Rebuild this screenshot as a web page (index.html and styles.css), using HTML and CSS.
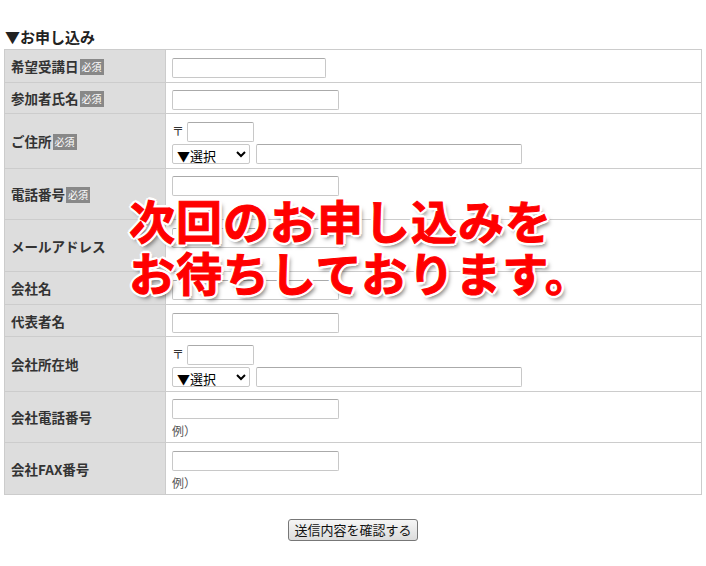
FILE: index.html
```html
<!DOCTYPE html>
<html lang="ja">
<head>
    <meta charset="UTF-8">
    <meta name="viewport" content="width=device-width, initial-scale=1.0">
    <title>お申し込み</title>
    <link rel="stylesheet" href="styles.css">
</head>
<body>

<div class="wrap">
    <h3 class="formTitle">▼お申し込み</h3>

    <table class="formTable">
        <tr class="h33">
            <th>希望受講日<span class="req">必須</span></th>
            <td><input type="text" class="inDate"></td>
        </tr>
        <tr class="h31">
            <th>参加者氏名<span class="req">必須</span></th>
            <td><input type="text" class="inMid"></td>
        </tr>
        <tr class="h55">
            <th>ご住所<span class="req">必須</span></th>
            <td>
                <div class="zipLine">〒 <input type="text" class="inZip"></div>
                <div class="prefLine">
                    <select class="inPref"><option>▼選択</option></select>
                    <input type="text" class="inAddr">
                </div>
            </td>
        </tr>
        <tr class="h51">
            <th>電話番号<span class="req">必須</span></th>
            <td><input type="text" class="inMid"><div class="note">&nbsp;</div></td>
        </tr>
        <tr class="h52">
            <th>メールアドレス</th>
            <td><input type="text" class="inMid"><div class="note">&nbsp;</div></td>
        </tr>
        <tr class="h33">
            <th>会社名</th>
            <td><input type="text" class="inMid"></td>
        </tr>
        <tr class="h32">
            <th>代表者名</th>
            <td><input type="text" class="inMid"></td>
        </tr>
        <tr class="h55">
            <th>会社所在地</th>
            <td>
                <div class="zipLine">〒 <input type="text" class="inZip"></div>
                <div class="prefLine">
                    <select class="inPref"><option>▼選択</option></select>
                    <input type="text" class="inAddr">
                </div>
            </td>
        </tr>
        <tr class="h51">
            <th>会社電話番号</th>
            <td><input type="text" class="inMid"><div class="note">例）</div></td>
        </tr>
        <tr class="h52">
            <th>会社FAX番号</th>
            <td><input type="text" class="inMid"><div class="note">例）</div></td>
        </tr>
    </table>

    <div class="submitArea">
        <button type="button" class="submitBtn">送信内容を確認する</button>
    </div>

    <div class="closedMsg">次回のお申し込みを<br>お待ちしております。</div>
</div>

</body>
</html>
```

FILE: styles.css
```css
body {
    margin: 0;
    padding: 0;
    background: #fff;
    color: #333;
    font-family: "Noto Sans CJK JP", "Noto Sans", sans-serif;
}

.wrap {
    position: relative;
    padding: 0 4px;
}

.formTitle {
    margin: 0;
    padding: 27px 0 0 1px;
    height: 22px;
    font-size: 15px;
    line-height: 20px;
    font-weight: bold;
    color: #222;
}

.formTable {
    width: 698px;
    border-collapse: collapse;
    border: 1px solid #ccc;
}

.formTable th,
.formTable td {
    border: 1px solid #ccc;
    padding: 0 6px;
    vertical-align: middle;
}

.formTable th {
    width: 148px;
    background: #ddd;
    text-align: left;
    font-size: 13.5px;
    font-weight: bold;
    color: #333;
    white-space: nowrap;
}

/* row heights */
.h31 { height: 31px; }
.h32 { height: 32px; }
.h33 { height: 33px; }
.h51 { height: 51px; }
.h52 { height: 52px; }
.h55 { height: 55px; }

.req {
    display: inline-block;
    margin-left: 1px;
    padding: 0 2px;
    background: #888;
    color: #fff;
    font-size: 10px;
    font-weight: normal;
    line-height: 16px;
    vertical-align: 1px;
}

.formTable input[type="text"] {
    box-sizing: border-box;
    height: 20px;
    margin: 0;
    padding: 1px 3px;
    border: 1px solid #c8c8c8;
    border-top-color: #aaa;
    border-radius: 2px;
    background: #fff;
    font-size: 12px;
    vertical-align: middle;
}

.inDate { width: 154px; }
.inMid { width: 167px; }
.inZip { width: 67px; height: 21px; }
.inAddr { width: 266px; }

.zipLine {
    font-size: 12px;
    line-height: 21px;
    height: 22px;
}

.prefLine {
    height: 21px;
    line-height: 20px;
}

.inPref {
    box-sizing: border-box;
    width: 78px;
    height: 20px;
    margin: 0 2px 0 0;
    padding: 0;
    border: 1px solid #c8c8c8;
    border-radius: 2px;
    background: #fff;
    font-family: "Noto Sans CJK JP", sans-serif;
    font-size: 13px;
    color: #000;
    vertical-align: middle;
}

.note {
    font-size: 12px;
    line-height: 16px;
    height: 16px;
    margin-top: 4px;
    color: #555;
}

.submitArea {
    text-align: center;
    padding-top: 21px;
}

.submitBtn {
    width: 130px;
    height: 22px;
    padding: 0;
    border: 1px solid #777;
    border-radius: 3px;
    background: linear-gradient(#f6f6f6, #dcdcdc);
    font-family: "Noto Sans CJK JP", sans-serif;
    font-size: 13px;
    color: #111;
}

.closedMsg {
    position: absolute;
    left: 129px;
    top: 193px;
    font-size: 46px;
    line-height: 52px;
    font-weight: bold;
    letter-spacing: 1px;
    color: #f00;
    white-space: nowrap;
    -webkit-text-stroke: 1px #f00;
    text-shadow:
        2px 0 0 #fff, -2px 0 0 #fff, 0 2px 0 #fff, 0 -2px 0 #fff,
        2px 2px 0 #fff, -2px -2px 0 #fff, 2px -2px 0 #fff, -2px 2px 0 #fff,
        3px 0 0 #fff, -3px 0 0 #fff, 0 3px 0 #fff, 0 -3px 0 #fff,
        3px 4px 4px rgba(0, 0, 0, 0.5);
}
```
